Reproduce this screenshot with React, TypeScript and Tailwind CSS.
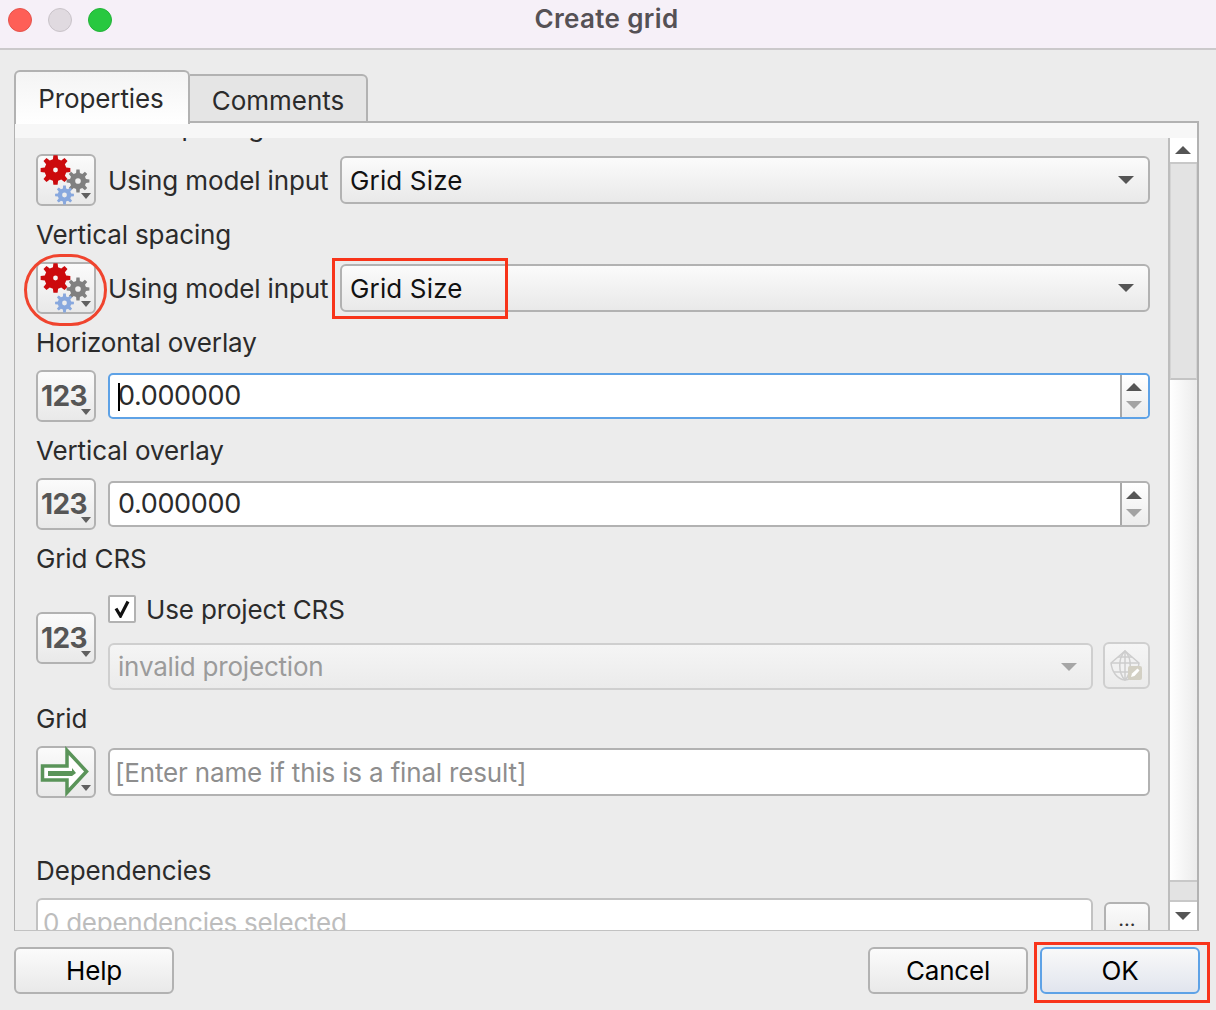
import React from "react";

function gearPath(cx: number, cy: number, ro: number, ri: number, teeth: number, hole: number) {
  const pts: string[] = [];
  const step = (Math.PI * 2) / teeth;
  for (let i = 0; i < teeth; i++) {
    const a = i * step - Math.PI / 2;
    const seq: [number, number][] = [
      [a - step * 0.3, ri],
      [a - step * 0.18, ro],
      [a + step * 0.18, ro],
      [a + step * 0.3, ri],
    ];
    for (const [t, r] of seq) {
      pts.push(`${(cx + Math.cos(t) * r).toFixed(2)} ${(cy + Math.sin(t) * r).toFixed(2)}`);
    }
  }
  const ring = `M${cx - hole} ${cy}a${hole} ${hole} 0 1 0 ${hole * 2} 0a${hole} ${hole} 0 1 0 ${-hole * 2} 0Z`;
  return `M${pts.join("L")}Z${ring}`;
}

const btn = "bg-gradient-to-b from-[#fbfbfb] to-[#e9e9e9] border-2 border-[#b2b2b2] rounded-[6px]";

function Caret({ className = "" }: { className?: string }) {
  return (
    <svg className={`absolute ${className}`} width="10" height="6" viewBox="0 0 10 6">
      <path d="M0 0H10L5 6Z" fill="#606060" />
    </svg>
  );
}

function ToolButton({ children }: { children: React.ReactNode }) {
  return (
    <div className={`relative w-[60px] h-[52px] shrink-0 ${btn}`}>
      {children}
      <Caret className="left-[43px] top-[37px]" />
    </div>
  );
}

function Gears() {
  return (
    <ToolButton>
      <svg className="absolute left-[-2px] top-[-2px]" width="60" height="52" viewBox="0 0 60 52">
        <path fillRule="evenodd" d={gearPath(19.5, 16, 15, 11, 8, 2.4)} fill="#cc0a0d" />
        <path fillRule="evenodd" d={gearPath(42, 27, 11.5, 8.2, 8, 2.8)} fill="#808080" />
        <path fillRule="evenodd" d={gearPath(28.5, 41, 9.5, 6.8, 8, 2.4)} fill="#88a8de" />
      </svg>
    </ToolButton>
  );
}

function Num() {
  return (
    <ToolButton>
      <span className="absolute left-[2px] top-[7px] w-[48px] text-center font-['Inter',sans-serif] text-[28px] leading-[34px] font-bold tracking-[-0.6px] text-[#565656]">
        123
      </span>
    </ToolButton>
  );
}

function Label({ children }: { children: React.ReactNode }) {
  return <div className="h-[36px] leading-[36px] text-[26px] text-[#2b2b2b] tracking-[-0.12px]">{children}</div>;
}

function Combo({ text }: { text: string }) {
  return (
    <div className={`relative flex-1 h-[48px] flex items-center pl-[8px] text-[26px] text-[#111111] tracking-[0.15px] ${btn}`}>
      {text}
      <svg className="absolute right-[14px] top-[18px]" width="16" height="8" viewBox="0 0 16 8">
        <path d="M0 0H16L8 8Z" fill="#555555" />
      </svg>
    </div>
  );
}

function Spin({ focus }: { focus?: boolean }) {
  return (
    <div
      className={`relative flex-1 h-[46px] my-[3px] flex items-center bg-white rounded-[5px] border-2 pl-[8px] text-[27px] text-[#2b2b2b] tracking-[-0.35px] ${
        focus ? "border-[#5ea2e6]" : "border-[#b2b2b2]"
      }`}
    >
      {focus && <span className="absolute left-[8px] top-[8px] w-[2px] h-[28px] bg-black" />}
      0.000000
      <div className="absolute right-0 top-0 bottom-0 w-[28px] border-l-2 border-[#a8a8a8] bg-gradient-to-b from-white to-[#ececec] rounded-r-[4px]">
        <svg className="absolute left-[4px] top-[8px]" width="16" height="26" viewBox="0 0 16 26">
          <path d="M0 8H16L8 0Z" fill="#555555" />
          <path d="M0 18H16L8 26Z" fill="#a3a3a3" />
        </svg>
      </div>
    </div>
  );
}

function Row({ children }: { children: React.ReactNode }) {
  return <div className="flex items-start gap-[12px] mt-[9px]">{children}</div>;
}

function UsingRow() {
  return (
    <Row>
      <Gears />
      <div className="h-[52px] w-[221px] flex items-center text-[26px] text-[#2b2b2b] tracking-[-0.12px] whitespace-nowrap">
        Using model input
      </div>
      <div className="flex flex-1 my-[2px] -ml-[1px]">
        <Combo text="Grid Size" />
      </div>
    </Row>
  );
}

function Globe() {
  return (
    <svg className="absolute left-[5px] top-[5px]" width="36" height="36" viewBox="0 0 36 36" fill="none">
      <g stroke="#cdcdcd" strokeWidth="1.5">
        <path d="M1 14 L15 2 L29 14 C28 23 23 30 15 31 C7 30 2 23 1 14Z" fill="#f1f1f1" />
        <path d="M1 14H29M4 23H26M8 8H22" />
        <path d="M15 2 C8 9 8 24 15 31 C22 24 22 9 15 2Z" />
        <path d="M15 2V31" />
      </g>
      <rect x="18" y="17" width="14" height="14" rx="2" fill="#d3d0c4" />
      <path d="M21 28L22 24.5L27.5 19.5L29.5 21.5L24.5 27Z" fill="#ffffff" />
    </svg>
  );
}

function FootButton({ children, primary, className = "" }: { children: React.ReactNode; primary?: boolean; className?: string }) {
  return (
    <div
      className={`w-[160px] h-[47px] flex items-center justify-center rounded-[6px] border-2 text-[26px] tracking-[-0.2px] text-black bg-gradient-to-b ${
        primary ? "border-[#5ea2e6] from-[#f9f9f9] to-[#e1e5ee]" : "border-[#b2b2b2] from-[#fbfbfb] to-[#e9e9e9]"
      } ${className}`}
    >
      {children}
    </div>
  );
}

export default function App() {
  return (
    <div className="relative w-[1216px] h-[1010px] overflow-hidden bg-[#ececec] font-['Inter',sans-serif]">
      <div className="relative h-[50px] bg-[#f6f0f8] border-b-2 border-[#cbc9cb] flex items-center justify-center">
        <div className="absolute left-[8px] top-[8px] flex gap-[16px]">
          <span className="w-[24px] h-[24px] rounded-full bg-[#fe5f57] border border-[#e5534c]" />
          <span className="w-[24px] h-[24px] rounded-full bg-[#e0dae0] border border-[#c9c3c9]" />
          <span className="w-[24px] h-[24px] rounded-full bg-[#28c840] border border-[#22b338]" />
        </div>
        <span className="text-[26px] font-semibold tracking-[0.35px] text-[#555155] -mt-[12px] -ml-[3px]">Create grid</span>
      </div>

      <div className="px-[14px]">
        <div className="flex items-end mt-[20px] h-[53px] relative z-10 -mb-[2px]">
          <div className="w-[176px] h-[54px] -mb-[1px] bg-gradient-to-b from-[#f4f4f4] to-[#ffffff] border-2 border-b-0 border-[#b2b2b2] rounded-t-[6px] flex items-center justify-center text-[26px] tracking-[-0.1px] text-[#2b2b2b] pr-[2px]">
            Properties
          </div>
          <div className="w-[178px] h-[49px] bg-[#e5e5e5] border-2 border-l-0 border-[#b2b2b2] rounded-tr-[6px] flex items-center justify-center text-[26px] text-[#2b2b2b] pt-[3px]">
            Comments
          </div>
        </div>

        <div className="w-[1185px] h-[810px] border-2 border-[#b2b2b2] border-l border-b border-b-[#c2c2c2] bg-[#ececec] flex flex-col">
          <div className="h-[15px] shrink-0 bg-[#f7f7f7]" />
          <div className="flex flex-1 min-h-0">
            <div className="flex-1 min-w-0 overflow-hidden pl-[21px] pr-[18px]">
              <div className="-mt-[29px]">
                <Label>Horizontal spacing</Label>
                <UsingRow />
                <div className="mt-[11px]"><Label>Vertical spacing</Label></div>
                <UsingRow />
                <div className="mt-[11px]"><Label>Horizontal overlay</Label></div>
                <Row><Num /><Spin focus /></Row>
                <div className="mt-[11px]"><Label>Vertical overlay</Label></div>
                <Row><Num /><Spin /></Row>
                <div className="mt-[11px]"><Label>Grid CRS</Label></div>
                <div className="flex gap-[12px] mt-[18px]">
                  <div className="mt-[17px]"><Num /></div>
                  <div className="flex-1 min-w-0">
                    <div className="flex items-center h-[28px] gap-[10px] text-[26px] text-[#2b2b2b] tracking-[-0.15px]">
                      <div className="relative w-[28px] h-[28px] bg-white border-2 border-[#b2b2b2] rounded-[2px]">
                        <svg className="absolute left-[3px] top-[3px]" width="18" height="18" viewBox="0 0 18 18" fill="none">
                          <path d="M3 8.5L7.5 16L15 1.5" stroke="#111111" strokeWidth="3.2" />
                        </svg>
                      </div>
                      Use project CRS
                    </div>
                    <div className="flex gap-[10px] mt-[20px]">
                      <div className="relative flex-1 h-[47px] flex items-center pl-[8px] text-[26px] text-[#9b9b9b] tracking-[-0.2px] border-2 border-[#cfcfcf] rounded-[6px] bg-gradient-to-b from-[#f5f5f5] to-[#ebebeb]">
                        invalid projection
                        <svg className="absolute right-[14px] top-[18px]" width="16" height="8" viewBox="0 0 16 8">
                          <path d="M0 0H16L8 8Z" fill="#a6a6a6" />
                        </svg>
                      </div>
                      <div className="relative w-[47px] h-[47px] -mt-[1px] border-2 border-[#cfcfcf] rounded-[6px] bg-gradient-to-b from-[#f5f5f5] to-[#ebebeb]">
                        <Globe />
                      </div>
                    </div>
                  </div>
                </div>
                <div className="mt-[11px]"><Label>Grid</Label></div>
                <Row>
                  <ToolButton>
                    <svg className="absolute left-[-2px] top-[-2px]" width="60" height="52" viewBox="0 0 60 52" fill="none">
                      <path d="M6.5 20H31V4.5L50.5 25.5L31 46.5V34H6.5Z" fill="#ffffff" stroke="#5a9459" strokeWidth="3.5" />
                      <path d="M12 25H36V22L40 27L36 30V30H12Z" fill="#5a9459" />
                    </svg>
                  </ToolButton>
                  <div className="flex-1 my-[2px] h-[48px] flex items-center bg-white border-2 border-[#b2b2b2] rounded-[6px] pl-[5px] text-[26px] text-[#8e8e8e] tracking-[-0.17px]">
                    [Enter name if this is a final result]
                  </div>
                </Row>
                <div className="mt-[55px]"><Label>Dependencies</Label></div>
                <div className="flex gap-[11px] mt-[9px] items-start">
                  <div className="flex-1 h-[48px] bg-white border-2 border-[#c2c2c2] rounded-[6px] pl-[5px] pt-[5px] leading-[36px] text-[26px] text-[#bdbdbd] tracking-[-0.26px]">
                    0 dependencies selected
                  </div>
                  <div className={`w-[46px] h-[48px] mt-[4px] flex items-start justify-center text-[20px] leading-[30px] text-[#333333] ${btn}`}>
                    ...
                  </div>
                </div>
              </div>
            </div>

            <div className="w-[29px] shrink-0 flex flex-col border-l-2 border-[#bdbdbd] bg-gradient-to-r from-[#ffffff] to-[#ececec]">
              <div className="h-[26px] shrink-0 border-b-2 border-[#c8c8c8] flex items-center justify-center bg-white pr-[2px]">
                <svg width="16" height="8" viewBox="0 0 16 8"><path d="M0 8H16L8 0Z" fill="#555555" /></svg>
              </div>
              <div className="h-[216px] shrink-0 bg-[#e3e3e3] border-x border-[#d4d4d4] border-b-2 border-b-[#c4c4c4]" />
              <div className="flex-1" />
              <div className="h-[22px] shrink-0 bg-[#e3e3e3] border-y-2 border-[#c8c8c8]" />
              <div className="h-[28px] shrink-0 flex items-center justify-center bg-white pr-[2px]">
                <svg width="16" height="8" viewBox="0 0 16 8"><path d="M0 0H16L8 8Z" fill="#555555" /></svg>
              </div>
            </div>
          </div>
        </div>

        <div className="flex items-start mt-[16px]">
          <FootButton>Help</FootButton>
          <FootButton className="ml-auto">Cancel</FootButton>
          <FootButton primary className="ml-[12px] mr-[2px]">OK</FootButton>
        </div>
      </div>

      <div className="absolute left-[24px] top-[254px] w-[83px] h-[72px] border-[3px] border-[#f0442e] rounded-full" />
      <div className="absolute left-[332px] top-[258px] w-[176px] h-[61px] border-[3px] border-[#f8341a]" />
      <div className="absolute left-[1034px] top-[942px] w-[176px] h-[61px] border-[3px] border-[#f8341a]" />
    </div>
  );
}
